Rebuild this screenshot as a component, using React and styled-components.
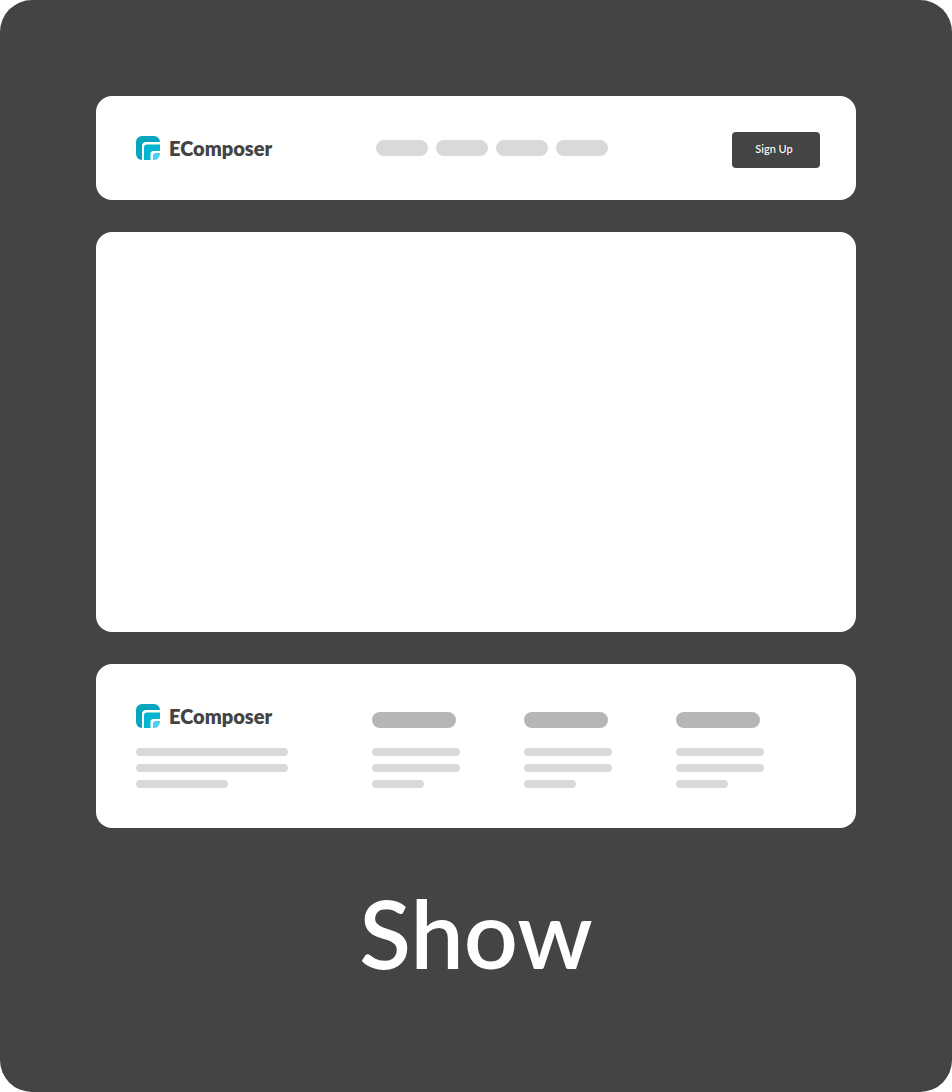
import React from "react";
import styled, { createGlobalStyle } from "styled-components";

const GlobalStyle = createGlobalStyle`
  *, *::before, *::after { box-sizing: border-box; }
  body { margin: 0; background: #fff; font-family: Lato, "Liberation Sans", sans-serif; color: #444; }
`;

const Stage = styled.main`
  display: flex;
  flex-direction: column;
  gap: 32px;
  min-height: 100vh;
  padding: 96px;
  background: #444;
  border-radius: 32px;
`;

const Card = styled.section`
  background: #fff;
  border-radius: 16px;
`;

const Header = styled(Card).attrs({ as: "header" })`
  display: grid;
  grid-template-columns: 1fr auto 1fr;
  align-items: center;
  padding: 36px 36px 32px 40px;
`;

const Content = styled(Card)`
  height: 400px;
`;

const Footer = styled(Card).attrs({ as: "footer" })`
  display: flex;
  justify-content: space-between;
  padding: 40px 92px 40px 40px;
`;

const Brand = styled.div`
  display: flex;
  align-items: center;
  gap: 9px;
  height: 24px;
`;

const HeaderBrand = styled.div`
  padding-bottom: 4px;
`;

const BrandName = styled.span`
  font-size: 20px;
  line-height: 24px;
  font-weight: 800;
`;

const Nav = styled.nav`
  display: flex;
  gap: 8px;
  padding: 0 0 4px 28px;
`;

const Bar = styled.div`
  width: ${(p) => p.$width}px;
  height: ${(p) => (p.$thick ? 16 : 8)}px;
  border-radius: 8px;
  background: ${(p) => (p.$dark ? "#b6b6b6" : "#d9d9d9")};
`;

const SignUp = styled.button`
  justify-self: end;
  width: 88px;
  height: 36px;
  padding: 0 4px 2px 0;
  border: 0;
  border-radius: 4px;
  background: #444;
  color: #fff;
  font: 500 11px/16px Lato, "Liberation Sans", sans-serif;
`;

const Lines = styled.div`
  display: flex;
  flex-direction: column;
  gap: 8px;
`;

const About = styled.div`
  display: flex;
  flex-direction: column;
  gap: 20px;
`;

const Columns = styled.div`
  display: flex;
  gap: 64px;
`;

const Column = styled(About)`
  padding-top: 8px;
`;

const Caption = styled.h1`
  margin: 16px 0 0;
  color: #fff;
  font-size: 95px;
  line-height: 112px;
  font-weight: 600;
  text-align: center;
`;

function Logo() {
  return (
    <Brand>
      <svg width="24" height="24" viewBox="0 0 24 24" aria-hidden="true">
        <path d="M6 0H18A6 6 0 0 1 24 6V24H6A6 6 0 0 1 0 18V6A6 6 0 0 1 6 0Z" fill="#05a5bd" />
        <path d="M6 24V10A4 4 0 0 1 10 6H24V24Z" fill="#fff" />
        <path d="M8 24V11.5A3 3 0 0 1 11 8.5H24V24Z" fill="#03b5d1" />
        <path d="M14.5 24V18A3 3 0 0 1 17.5 15H24V24Z" fill="#fff" />
        <path d="M17 24V20A3 3 0 0 1 20 17H24V18A6 6 0 0 1 18 24Z" fill="#4dcff0" />
      </svg>
      <BrandName>EComposer</BrandName>
    </Brand>
  );
}

export default function App() {
  return (
    <>
      <GlobalStyle />
      <Stage>
        <Header>
          <HeaderBrand>
            <Logo />
          </HeaderBrand>
          <Nav>
            {[0, 1, 2, 3].map((i) => (
              <Bar key={i} $width={52} $thick />
            ))}
          </Nav>
          <SignUp type="button">Sign Up</SignUp>
        </Header>
        <Content />
        <Footer>
          <About>
            <Logo />
            <Lines>
              <Bar $width={152} />
              <Bar $width={152} />
              <Bar $width={92} />
            </Lines>
          </About>
          <Columns>
            {[0, 1, 2].map((i) => (
              <Column key={i}>
                <Bar $width={84} $thick $dark />
                <Lines>
                  <Bar $width={88} />
                  <Bar $width={88} />
                  <Bar $width={52} />
                </Lines>
              </Column>
            ))}
          </Columns>
        </Footer>
        <Caption>Show</Caption>
      </Stage>
    </>
  );
}
